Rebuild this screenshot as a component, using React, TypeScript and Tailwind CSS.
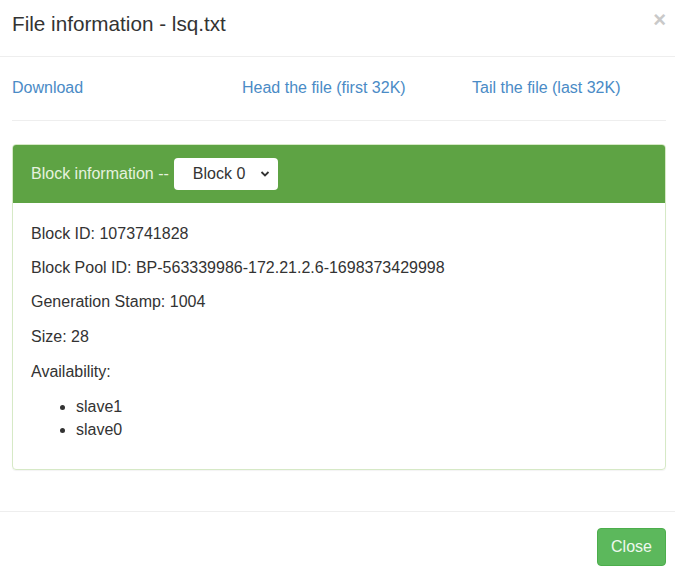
import React from 'react';

const font = { fontFamily: '"Liberation Sans", Arial, sans-serif' };

export default function App() {
  return (
    <div className="w-[675px] h-[572px] bg-white text-[#333] overflow-hidden" style={font}>
      {/* header */}
      <div className="h-[57px] border-b border-[#eeeeee] pl-[12px] pr-[9px] flex items-start justify-between">
        <h4 className="text-[20.7px] leading-[26px] mt-[11px]">File information - lsq.txt</h4>
        <button className="text-[22px] leading-none font-bold text-[#c9c9c9] mt-[9px]">×</button>
      </div>

      {/* body */}
      <div className="pl-[12px] pr-[9px]">
        <div className="grid grid-cols-[230px_230px_1fr] h-[60px] mt-[1px] mb-[2px] items-center text-[16px] text-[#4a8bc6]">
          <a href="#">Download</a>
          <a href="#">Head the file (first 32K)</a>
          <a href="#">Tail the file (last 32K)</a>
        </div>
        <hr className="border-t border-[#eeeeee]" />

        <div className="mt-[23px] border border-[#d6e9c6] rounded-[4px] shadow-[0_1px_1px_rgba(0,0,0,0.05)]">
          <div className="h-[58px] bg-[#5ea344] rounded-t-[3px] px-[18px] flex items-center gap-[5px] text-[16px] text-[#e6f2df]">
            <span>Block information --</span>
            <div className="relative">
              <select className="appearance-none w-[104px] h-[32px] bg-white rounded-[4px] pl-[19px] text-[16px] text-[#333] outline-none">
                <option>Block 0</option>
              </select>
              <svg className="absolute right-[8px] top-[12px] pointer-events-none" width="10" height="8" viewBox="0 0 10 8">
                <path d="M1.5 2 L5 5.5 L8.5 2" stroke="#333" strokeWidth="1.8" fill="none" />
              </svg>
            </div>
          </div>
          <div className="px-[18px] pt-[19px] pb-[17px] text-[16px] leading-[23px]">
            <p className="mb-[11px]">Block ID: 1073741828</p>
            <p className="mb-[11px]">Block Pool ID: BP-563339986-172.21.2.6-1698373429998</p>
            <p className="mb-[12px]">Generation Stamp: 1004</p>
            <p className="mb-[12px]">Size: 28</p>
            <p className="mb-[12px]">Availability:</p>
            <ul className="list-disc pl-[45px] mb-[11px]">
              <li>slave1</li>
              <li>slave0</li>
            </ul>
          </div>
        </div>
      </div>

      {/* footer */}
      <div className="mt-[41px] border-t border-[#eeeeee] px-[9px] pt-[16px] flex justify-end">
        <button className="w-[69px] h-[38px] rounded-[4px] bg-[#5cb85c] border border-[#4cae4c] text-[16px] text-[#eef8ee]">
          Close
        </button>
      </div>
    </div>
  );
}
